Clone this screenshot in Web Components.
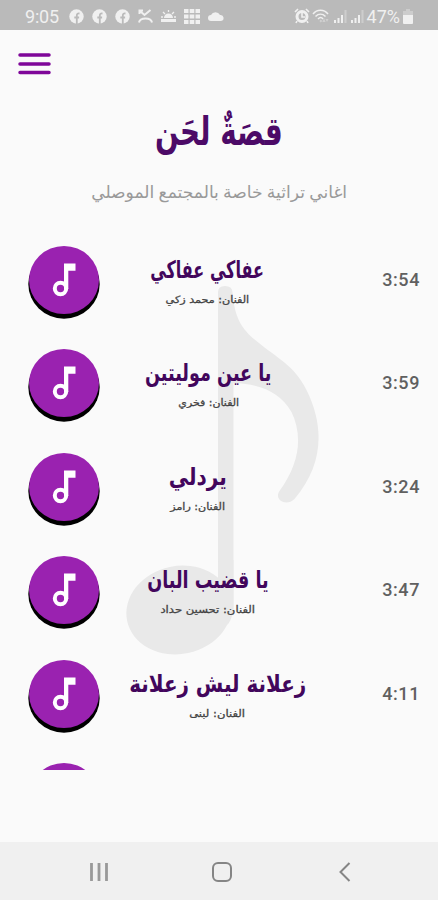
<!DOCTYPE html>
<html lang="ar">
<head>
<meta charset="utf-8">
<title>قصة لحن</title>
<style>
	body {
		margin: 0;
		font-family: Roboto, "DejaVu Sans", sans-serif;
	}
</style>
</head>
<body>
<song-app>
	<status-bar slot="top" time="9:05" battery="47%"></status-bar>
	<app-header slot="header">
		<fit-text slot="title" width="125" size="40" weight="700">قصَةٌ لحَن</fit-text>
		<fit-text slot="subtitle" width="256" size="17">اغاني تراثية خاصة بالمجتمع الموصلي</fit-text>
	</app-header>
	<song-row time="3:54" center="207">
		<fit-text width="112" size="24" weight="700">عفاكي عفاكي</fit-text>
		<fit-text slot="artist" width="81" size="10">الفنان: محمد زكي</fit-text>
	</song-row>
	<song-row time="3:59" center="208.5">
		<fit-text width="123" size="24" weight="700">يا عين موليتين</fit-text>
		<fit-text slot="artist" width="59" size="10">الفنان: فخري</fit-text>
	</song-row>
	<song-row time="3:24" center="198">
		<fit-text width="58" size="24" weight="700">يردلي</fit-text>
		<fit-text slot="artist" width="53" size="10">الفنان: رامز</fit-text>
	</song-row>
	<song-row time="3:47" center="207.5">
		<fit-text width="118" size="24" weight="700">يا قضيب البان</fit-text>
		<fit-text slot="artist" width="92" size="10">الفنان: تحسين حداد</fit-text>
	</song-row>
	<song-row time="4:11" center="217.5">
		<fit-text width="173" size="24" weight="700">زعلانة ليش زعلانة</fit-text>
		<fit-text slot="artist" width="54" size="10">الفنان: لبنى</fit-text>
	</song-row>
	<song-row></song-row>
	<nav-bar slot="bottom"></nav-bar>
</song-app>

<script>
class FitText extends HTMLElement {
	constructor() {
		super();
		this.attachShadow({ mode: "open" });
		this.shadowRoot.innerHTML = `
      <style>
        :host {
          display: flex;
          justify-content: center;
          direction: rtl;
          white-space: nowrap;
        }

        span {
          flex: none;
          transform-origin: center;
        }
      </style>
      <span><slot></slot></span>
    `;
	}

	connectedCallback() {
		const span = this.shadowRoot.querySelector("span");
		const width = Number(this.getAttribute("width"));

		this.style.width = `${width}px`;
		this.style.fontSize = `${this.getAttribute("size")}px`;
		this.style.fontWeight = this.getAttribute("weight") || "400";

		// squeeze the line to its width
		span.style.transform = `scaleX(${width / span.getBoundingClientRect().width})`;
	}
}

class StatusBar extends HTMLElement {
	constructor() {
		super();
		this.attachShadow({ mode: "open" });
		this.shadowRoot.innerHTML = `
      <style>
        :host {
          display: flex;
          align-items: center;
          box-sizing: border-box;
          height: 30px;
          padding: 2px 24px 0 25px;
          background: #bababa;
          color: #f0f0f0;
          font-size: 18px;
        }

        .time {
          width: 44px;
          letter-spacing: -0.2px;
        }

        .left, .right {
          display: flex;
          align-items: center;
        }

        .left {
          gap: 8px;
        }

        .right {
          gap: 2px;
          margin-left: auto;
        }

        .right svg:first-child {
          margin-right: -1px;
        }

        svg {
          display: block;
          fill: currentColor;
        }
      </style>
      <span class="time">${this.getAttribute("time")}</span>
      <div class="left">
        ${this._facebook().repeat(3)}
        <svg width="15" height="15" viewBox="0 0 15 15"><path d="M1.500 5V1.500H5M2 2l4.500 4 6-5M1 13.500c1-5.500 12-5.500 13 0" fill="none" stroke="currentColor" stroke-width="2"/></svg>
        <svg width="15" height="15" viewBox="0 0 15 15"><path d="M3 9a4.500 4.500 0 0 1 9 0zM0 10h15v3H0z"/><path d="M7.500 1v2M2 3l2 2M13 3l-2 2M0 8h2M13 8h2" stroke="currentColor" stroke-width="1.300"/></svg>
        <svg width="16" height="15" viewBox="0 0 16 15"><path d="M0 0h4.500v4H0zM5.700 0h4.600v4H5.700zM11.500 0H16v4h-4.500zM0 5.500h4.500v4H0zM5.700 5.500h4.600v4H5.700zM11.500 5.500H16v4h-4.500zM0 11h4.500v4H0zM5.700 11h4.600v4H5.700zM11.500 11H16v4h-4.500z"/></svg>
        <svg width="16" height="15" viewBox="0 0 16 15"><path d="M3 12a3 3 0 0 1 0-6 5 5 0 0 1 9 0 3 3 0 0 1 1 6z"/></svg>
      </div>
      <div class="right">
        <svg width="16" height="16" viewBox="0 0 16 16"><circle cx="8" cy="8.500" r="5" fill="none" stroke="currentColor" stroke-width="3"/><path d="M1 4l3-3M15 4l-3-3M3 13l-1 2M13 13l1 2M8 5v4h3" fill="none" stroke="currentColor" stroke-width="1.600"/></svg>
        <svg width="20" height="16" viewBox="0 0 20 16"><path d="M2 6c4-5 11-5 15 0M4.500 8.500c3-3 7-3 10 0M7 11c2-2 3.500-2 5 0" fill="none" stroke="currentColor" stroke-width="1.500"/><path d="M9.500 11.500l2 1.500-2 1.500-1-1.500zM13 10l1.500 4h-3zM16 14l-1.500-3h3z" opacity=".4"/></svg>
        ${this._signal()}
        ${this._signal()}
        <span>${this.getAttribute("battery")}</span>
        <svg width="12" height="15" viewBox="0 0 12 15"><path d="M4 0h4v2h3v4H1V2h3z" opacity=".35"/><path d="M1 6h10v8q0 1-1 1H2q-1 0-1-1z"/></svg>
      </div>
    `;
	}

	_facebook() {
		return `<svg width="15" height="15" viewBox="0 0 15 15"><circle cx="7.500" cy="7.500" r="7.200"/><path d="M7.800 15V7c0-2 .7-2.700 2.700-2.500M5.300 8.500h4.800" fill="none" stroke="#bababa" stroke-width="1.800"/></svg>`;
	}

	_signal() {
		return `<svg width="15" height="14" viewBox="0 0 15 14"><path d="M1 11h2v3H1zM4.500 9h2v5h-2zM8 6h2v8H8z"/><path d="M11.500 1h2v13h-2z" opacity=".35"/></svg>`;
	}
}

class AppHeader extends HTMLElement {
	constructor() {
		super();
		this.attachShadow({ mode: "open" });
		this.shadowRoot.innerHTML = `
      <style>
        :host {
          display: flex;
          flex-direction: column;
          align-items: center;
          height: 216px;
        }

        .menu {
          align-self: flex-start;
          margin: 22px 0 0 18px;
          display: block;
        }

        .title {
          height: 70px;
          margin-top: 20px;
          line-height: 70px;
          color: #4c0a67;
          font-family: "DejaVu Sans", sans-serif;
        }

        .subtitle {
          margin-top: 10px;
          line-height: 32px;
          color: #999;
        }
      </style>
      <svg class="menu" width="33" height="24" viewBox="0 0 33 24">
        <path d="M2 3h29M2 12h29M2 20.500h29" stroke="#7f0799" stroke-width="3.500" stroke-linecap="round"/>
      </svg>
      <div class="title"><slot name="title"></slot></div>
      <div class="subtitle"><slot name="subtitle"></slot></div>
    `;
	}
}

class SongRow extends HTMLElement {
	constructor() {
		super();
		this.attachShadow({ mode: "open" });
		this.shadowRoot.innerHTML = `
      <style>
        :host {
          display: grid;
          grid-template-columns: 72px 1fr 38px;
          height: 103.4px;
          padding: 0 18px 0 28px;
          box-sizing: border-box;
          flex: none;
        }

        .disc {
          width: 70px;
          height: 68px;
          margin-left: 1px;
          border-radius: 50%;
          background: #9a22b0;
          box-shadow: 0 4px 0 0.7px #000;
          display: flex;
          align-items: center;
          justify-content: center;
        }

        .text {
          display: flex;
          flex-direction: column;
          align-items: center;
          width: calc(2 * (var(--center) - 100px));
          font-family: "DejaVu Sans", sans-serif;
        }

        .song {
          height: 44px;
          line-height: 48px;
          color: #42065c;
        }

        .artist {
          line-height: 20px;
          color: #444;
          -webkit-text-stroke: 0.3px #444;
        }

        .time {
          justify-self: end;
          line-height: 68px;
          font-size: 18px;
          font-weight: 500;
          letter-spacing: 0.6px;
          color: #606060;
        }
      </style>
      <div class="disc">
        <svg width="24" height="36" viewBox="0 0 24 36">
          <circle cx="8.500" cy="26.500" r="5.700" fill="none" stroke="#fff" stroke-width="4"/>
          <path d="M12 1.500h11.500v7.300h-7.200V27H12z" fill="#fff"/>
        </svg>
      </div>
      <div class="text">
        <div class="song"><slot></slot></div>
        <div class="artist"><slot name="artist"></slot></div>
      </div>
      <div class="time">${this.getAttribute("time") || ""}</div>
    `;
		this.style.setProperty("--center", `${this.getAttribute("center") || 207}px`);
	}
}

class NavBar extends HTMLElement {
	constructor() {
		super();
		this.attachShadow({ mode: "open" });
		this.shadowRoot.innerHTML = `
      <style>
        :host {
          display: grid;
          grid-template-columns: 22px 22px 14px;
          column-gap: 101px;
          align-items: center;
          box-sizing: border-box;
          height: 58px;
          padding: 2px 0 0 88px;
          background: #f0f0f0;
        }

        svg {
          fill: none;
          stroke: #858585;
          stroke-width: 2;
        }

        svg:last-child {
          margin-left: 4px;
        }
      </style>
      <svg width="22" height="22" viewBox="0 0 22 22"><path d="M3.500 2v18M11 2v18M18.500 2v18" stroke="#999" stroke-width="2.800"/></svg>
      <svg width="22" height="22" viewBox="0 0 22 22"><rect x="2" y="2" width="18" height="18" rx="5"/></svg>
      <svg width="14" height="22" viewBox="0 0 14 22"><path d="M11.500 2L2.500 11l9 9"/></svg>
    `;
	}
}

class SongApp extends HTMLElement {
	constructor() {
		super();
		this.attachShadow({ mode: "open" });
		this.shadowRoot.innerHTML = `
      <style>
        :host {
          display: flex;
          flex-direction: column;
          height: 900px;
          position: relative;
          overflow: hidden;
          background: #fafafa;
        }

        .list {
          display: flex;
          flex-direction: column;
          height: 524px;
          overflow: hidden;
          position: relative;
        }

        .space {
          flex: 1;
        }

        /* big note behind the songs */
        .note {
          position: absolute;
          left: 120px;
          top: 280px;
          fill: #e9e9e9;
        }
      </style>
      <svg class="note" width="205" height="380" viewBox="120 280 205 380">
        <path d="M218 292q0-6 7-6 7 0 7.500 6c2 26 9 37 24 49 20 17 38 24 50 49 19 38 16 76-12 109-8 8-21 1-15-8 21-29 23-56 12-79-11-19-30-28-58-29V610h-15.500z"/>
        <ellipse cx="179" cy="610" rx="53" ry="44" transform="rotate(-12 179 610)"/>
        <path d="M218 560h15.500v45q0 12-6 20z"/>
      </svg>
      <slot name="top"></slot>
      <slot name="header"></slot>
      <div class="list"><slot></slot></div>
      <div class="space"></div>
      <slot name="bottom"></slot>
    `;
	}
}

customElements.define("fit-text", FitText);
customElements.define("status-bar", StatusBar);
customElements.define("app-header", AppHeader);
customElements.define("song-row", SongRow);
customElements.define("nav-bar", NavBar);
customElements.define("song-app", SongApp);
</script>
</body>
</html>
